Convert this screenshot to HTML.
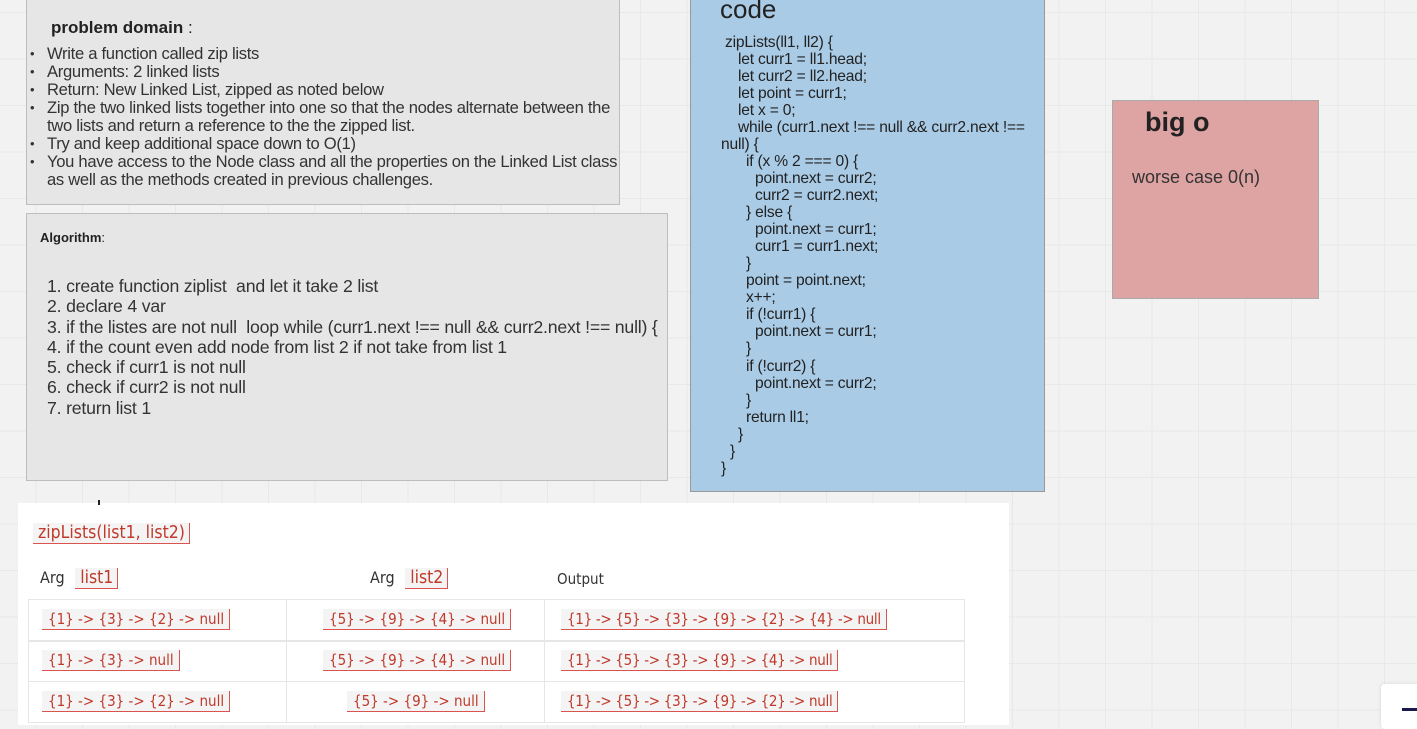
<!DOCTYPE html>
<html><head><meta charset="utf-8"><style>
*{margin:0;padding:0;box-sizing:border-box}
body{width:1417px;height:725px;overflow:hidden;position:relative;font-family:"Liberation Sans",Arial,sans-serif;
background-color:#f2f2f2;
background-image:linear-gradient(#e8e8e8 1px,transparent 1px),linear-gradient(90deg,#e8e8e8 1px,transparent 1px);
background-size:46.5px 46.5px;background-position:-11px 12px}
.box{position:absolute}
.t{position:absolute;white-space:nowrap}
.c{position:absolute;white-space:nowrap;font-size:15.6px;color:#222;line-height:17px;letter-spacing:-0.2px}
.pill{display:inline-block;background:#f4f4f4;color:#c0392b;border-right:1.5px solid #d9534f;border-bottom:1.5px solid #d9534f;font-family:"DejaVu Sans Condensed","Liberation Sans Narrow","Liberation Sans",sans-serif;font-size:15px;padding:1px 5px 0 6px;line-height:19px}
.pill.big{font-size:17.5px;padding:0 4px 0 5px;line-height:20px}
.pd div{position:relative;padding-left:17px}
.pd div.b::before{content:"•";position:absolute;left:0;font-size:13px}
</style></head><body>
<div class="box" style="left:26px;top:-2px;width:594px;height:207px;background:#e6e6e6;border:1px solid #bdbdbd"></div>
<div class="t" style="left:51px;top:18px;font-size:17px;color:#222"><b>problem domain</b> :</div>
<div class="pd" style="position:absolute;left:30px;top:45px;font-size:16.6px;color:#333;line-height:18px;letter-spacing:-0.3px;white-space:nowrap">
<div class="b">Write a function called zip lists</div>
<div class="b">Arguments: 2 linked lists</div>
<div class="b">Return: New Linked List, zipped as noted below</div>
<div class="b">Zip the two linked lists together into one so that the nodes alternate between the</div>
<div>two lists and return a reference to the the zipped list.</div>
<div class="b">Try and keep additional space down to O(1)</div>
<div class="b">You have access to the Node class and all the properties on the Linked List class</div>
<div>as well as the methods created in previous challenges.</div>
</div>
<div class="box" style="left:26px;top:213px;width:642px;height:268px;background:#e6e6e6;border:1px solid #bdbdbd"></div>
<div class="t" style="left:40px;top:230px;font-size:13px;color:#222"><b>Algorithm</b>:</div>
<div style="position:absolute;left:47px;top:276px;font-size:17.7px;color:#333;line-height:20.3px;letter-spacing:-0.2px;white-space:nowrap">
<div>1. create function ziplist&nbsp; and let it take 2 list</div>
<div>2. declare 4 var</div>
<div>3. if the listes are not null&nbsp; loop while (curr1.next !== null &amp;&amp; curr2.next !== null) {</div>
<div>4. if the count even add node from list 2 if not take from list 1</div>
<div>5. check if curr1 is not null</div>
<div>6. check if curr2 is not null</div>
<div>7. return list 1</div>
</div>
<div class="box" style="left:690px;top:-2px;width:355px;height:494px;background:#a9cbe6;border:1px solid #999"></div>
<div class="t" style="left:720px;top:-6px;font-size:26px;color:#222">code</div>
<div class="c" style="left:725px;top:34px">zipLists(ll1, ll2) {</div>
<div class="c" style="left:738px;top:51px">let curr1 = ll1.head;</div>
<div class="c" style="left:738px;top:68px">let curr2 = ll2.head;</div>
<div class="c" style="left:738px;top:85px">let point = curr1;</div>
<div class="c" style="left:738px;top:102px">let x = 0;</div>
<div class="c" style="left:738px;top:119px">while (curr1.next !== null &amp;&amp; curr2.next !==</div>
<div class="c" style="left:721px;top:136px">null) {</div>
<div class="c" style="left:746px;top:153px">if (x % 2 === 0) {</div>
<div class="c" style="left:755px;top:170px">point.next = curr2;</div>
<div class="c" style="left:755px;top:187px">curr2 = curr2.next;</div>
<div class="c" style="left:746px;top:204px">} else {</div>
<div class="c" style="left:755px;top:221px">point.next = curr1;</div>
<div class="c" style="left:755px;top:238px">curr1 = curr1.next;</div>
<div class="c" style="left:746px;top:255px">}</div>
<div class="c" style="left:746px;top:272px">point = point.next;</div>
<div class="c" style="left:746px;top:289px">x++;</div>
<div class="c" style="left:746px;top:306px">if (!curr1) {</div>
<div class="c" style="left:755px;top:323px">point.next = curr1;</div>
<div class="c" style="left:746px;top:340px">}</div>
<div class="c" style="left:746px;top:358px">if (!curr2) {</div>
<div class="c" style="left:755px;top:375px">point.next = curr2;</div>
<div class="c" style="left:746px;top:392px">}</div>
<div class="c" style="left:746px;top:409px">return ll1;</div>
<div class="c" style="left:738px;top:426px">}</div>
<div class="c" style="left:730px;top:443px">}</div>
<div class="c" style="left:721px;top:460px">}</div>
<div class="box" style="left:1112px;top:100px;width:207px;height:199px;background:#dea3a3;border:1px solid #aaa"></div>
<div class="t" style="left:1145px;top:107px;font-size:27px;font-weight:bold;color:#222">big o</div>
<div class="t" style="left:1132px;top:167px;font-size:18px;color:#333">worse case 0(n)</div>
<div class="box" style="left:18px;top:503px;width:991px;height:222px;background:#fff"></div>
<div class="box" style="left:98px;top:500px;width:2px;height:5px;background:#222"></div>
<div class="t" style="left:33px;top:523px"><span class="pill big">zipLists(list1, list2)</span></div>
<div class="t" style="left:40px;top:568px;font-family:'DejaVu Sans Condensed',sans-serif;font-size:16px;color:#333">Arg <span class="pill big" style="margin-left:6px">list1</span></div>
<div class="t" style="left:370px;top:568px;font-family:'DejaVu Sans Condensed',sans-serif;font-size:16px;color:#333">Arg <span class="pill big" style="margin-left:6px">list2</span></div>
<div class="t" style="left:557px;top:570px;font-family:'DejaVu Sans Condensed',sans-serif;font-size:15px;color:#333">Output</div>
<div class="box" style="left:28px;top:599px;width:937px;height:124px;border:1px solid #e6e6e6"></div>
<div class="box" style="left:28px;top:640px;width:937px;height:2px;background:#e6e6e6"></div>
<div class="box" style="left:28px;top:681px;width:937px;height:1px;background:#e6e6e6"></div>
<div class="box" style="left:286px;top:599px;width:1px;height:124px;background:#e6e6e6"></div>
<div class="box" style="left:544px;top:599px;width:1px;height:124px;background:#e6e6e6"></div>
<div class="t" style="left:42px;top:609px"><span class="pill">{1} -&gt; {3} -&gt; {2} -&gt; null</span></div>
<div class="t" style="left:323px;top:609px"><span class="pill">{5} -&gt; {9} -&gt; {4} -&gt; null</span></div>
<div class="t" style="left:561px;top:609px"><span class="pill" style="letter-spacing:-0.3px">{1} -&gt; {5} -&gt; {3} -&gt; {9} -&gt; {2} -&gt; {4} -&gt; null</span></div>
<div class="t" style="left:42px;top:650px"><span class="pill">{1} -&gt; {3} -&gt; null</span></div>
<div class="t" style="left:323px;top:650px"><span class="pill">{5} -&gt; {9} -&gt; {4} -&gt; null</span></div>
<div class="t" style="left:561px;top:650px"><span class="pill" style="letter-spacing:-0.3px">{1} -&gt; {5} -&gt; {3} -&gt; {9} -&gt; {4} -&gt; null</span></div>
<div class="t" style="left:42px;top:691px"><span class="pill">{1} -&gt; {3} -&gt; {2} -&gt; null</span></div>
<div class="t" style="left:347px;top:691px"><span class="pill">{5} -&gt; {9} -&gt; null</span></div>
<div class="t" style="left:561px;top:691px"><span class="pill" style="letter-spacing:-0.3px">{1} -&gt; {5} -&gt; {3} -&gt; {9} -&gt; {2} -&gt; null</span></div>
<div class="box" style="left:1381px;top:684px;width:40px;height:45px;background:#fff;border-radius:4px;box-shadow:0 0 4px rgba(0,0,0,.1)"></div>
<div class="box" style="left:1402px;top:708px;width:15px;height:3px;background:#1a1a4a"></div>
</body></html>
